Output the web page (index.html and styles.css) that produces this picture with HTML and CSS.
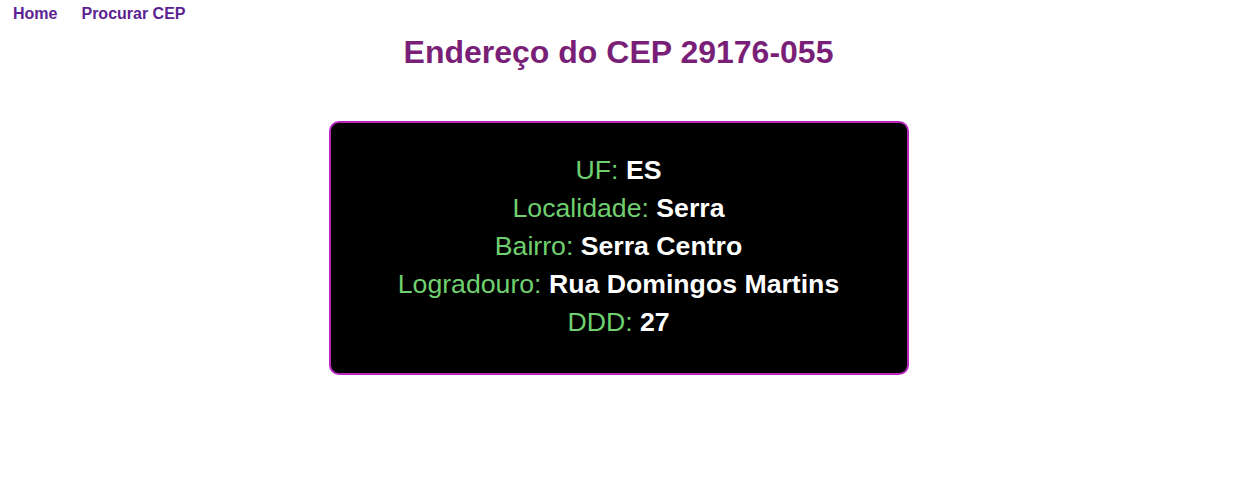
FILE: index.html
```html
<!DOCTYPE html>
<html lang="pt-BR">
<head>
<meta charset="utf-8">
<title>Endereço do CEP 29176-055</title>
<link rel="stylesheet" href="styles.css">
</head>
<body>
<nav class="nav">
  <a class="nav-link" href="#">Home</a>
  <a class="nav-link" href="#">Procurar CEP</a>
</nav>
<h1 class="title">Endereço do CEP 29176-055</h1>
<main class="card">
  <p class="row"><span class="label">UF:</span> <strong class="value">ES</strong></p>
  <p class="row"><span class="label">Localidade:</span> <strong class="value">Serra</strong></p>
  <p class="row"><span class="label">Bairro:</span> <strong class="value">Serra Centro</strong></p>
  <p class="row"><span class="label">Logradouro:</span> <strong class="value">Rua Domingos Martins</strong></p>
  <p class="row"><span class="label">DDD:</span> <strong class="value">27</strong></p>
</main>
</body>
</html>
```

FILE: styles.css
```css
html, body {
  margin: 0;
  padding: 0;
  background: #ffffff;
  font-family: "Liberation Sans", Arial, sans-serif;
}

.nav {
  display: flex;
  gap: 24px;
  padding: 5px 13px 0;
}

.nav-link {
  font-size: 16px;
  line-height: 18px;
  font-weight: bold;
  color: #5b2391;
  text-decoration: none;
}

.title {
  margin: 11px 0 0;
  font-size: 32px;
  line-height: 37px;
  font-weight: bold;
  color: #7a1f78;
  text-align: center;
}

.card {
  box-sizing: border-box;
  width: 580px;
  margin: 50px auto 0;
  padding: 28px 20px 32px;
  background: #000000;
  border: 2px solid #b827bd;
  border-radius: 10px;
  text-align: center;
}

.row {
  margin: 0;
  font-size: 26.67px;
  line-height: 38px;
}

.label {
  color: #6fd06f;
}

.value {
  color: #ffffff;
  font-weight: bold;
}
```
